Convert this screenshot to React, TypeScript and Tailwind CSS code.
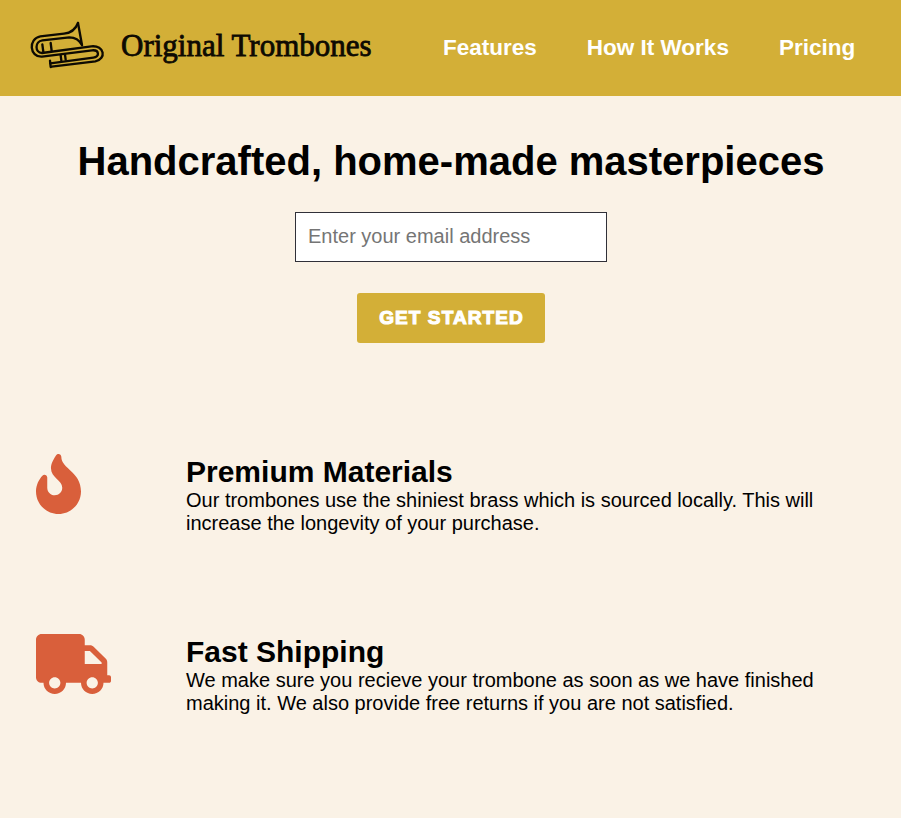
import React from "react";
import { FaFire, FaTruck } from "react-icons/fa";

function TromboneLogo() {
  return (
    <svg
      className="block h-[70px] w-[100px] shrink-0"
      viewBox="0 0 300 210"
      fill="none"
      stroke="#0d0a02"
      strokeWidth="7"
      strokeLinejoin="round"
      strokeLinecap="round"
    >
      <path d="M186 105 C178 90 166 82 148 82 L67 91 C44 94 44 128 66 129 L214 109 C254 105 260 147 226 154 L95 170" />
      <path d="M174 39 C166 60 152 69 132 71 L61 79 C24 86 28 142 66 140 L216 121 C239 119 239 141 220 143 L91 160" />
      <path d="M174 39 L186 105 M90 152 L92 171 M67 103 L70 126 M92 99 L95 123 M122 136 L124 151 M135 134 L137 149" />
    </svg>
  );
}

const features = [
  {
    title: "Premium Materials",
    text: "Our trombones use the shiniest brass which is sourced locally. This will increase the longevity of your purchase.",
    icon: <FaFire className="block h-[60px] w-[45px]" />,
  },
  {
    title: "Fast Shipping",
    text: "We make sure you recieve your trombone as soon as we have finished making it. We also provide free returns if you are not satisfied.",
    icon: <FaTruck className="block h-[60px] w-[75px]" />,
  },
];

export default function App() {
  return (
    <div className="h-[818px] w-[901px] overflow-hidden bg-[#faf2e6] font-['Liberation_Sans',Arial,sans-serif] text-black">
      <header className="flex h-24 bg-[#d3af37] pl-5 pt-2.5">
        <TromboneLogo />
        <div className="w-[323px] shrink-0 whitespace-nowrap pl-px font-['Liberation_Serif',Georgia,serif] text-[31px] leading-[72px] text-[#0d0a02] [-webkit-text-stroke:0.8px_#0d0a02]">
          Original Trombones
        </div>
        <nav className="flex gap-[50px] whitespace-nowrap text-[22.5px] font-bold leading-[75px] text-white">
          <a>Features</a>
          <a>How It Works</a>
          <a>Pricing</a>
        </nav>
      </header>
      <main>
        <section className="flex flex-col items-center pt-[42px]">
          <h1 className="whitespace-nowrap pl-px text-[40px] font-bold leading-[46px]">
            Handcrafted, home-made masterpieces
          </h1>
          <input
            type="email"
            placeholder="Enter your email address"
            className="mt-7 h-[50px] w-[312px] border border-[#303038] bg-white pb-px pl-[12.5px] pr-3 text-[20px] placeholder:text-[#757575]"
          />
          <button className="mt-[31px] h-[50px] w-[188px] rounded-[3px] bg-[#d3af37] pl-0.5 text-[19px] font-black tracking-[1.1px] text-white [-webkit-text-stroke:1.1px_white]">
            GET STARTED
          </button>
        </section>
        <section className="pl-[35.5px] pt-[111px]">
          {features.map((feature) => (
            <article key={feature.title} className="flex h-[180px]">
              <div className="w-[150.5px] shrink-0 text-[#d95f3b]">{feature.icon}</div>
              <div className="w-[650px]">
                <h2 className="text-[30px] font-bold leading-[35px]">{feature.title}</h2>
                <p className="text-[20px] leading-[23px]">{feature.text}</p>
              </div>
            </article>
          ))}
        </section>
      </main>
    </div>
  );
}
